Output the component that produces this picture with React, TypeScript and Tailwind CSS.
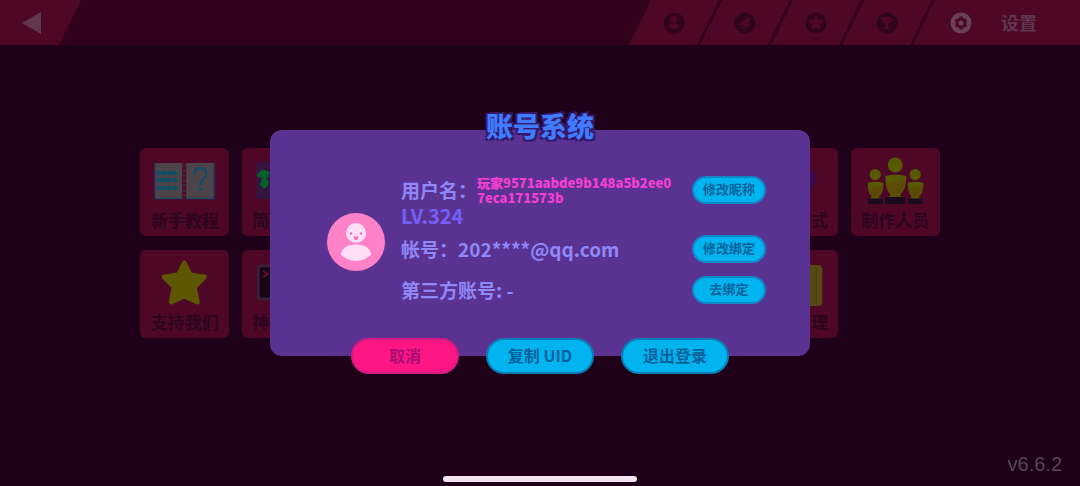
import type { ReactNode } from "react";

interface MenuItem {
  id: string;
  label?: string;
  align?: "left" | "right";
  icon?: ReactNode;
}

const Person = ({ x, y, scale }: { x: number; y: number; scale: number }) => (
  <g transform={`translate(${x} ${y}) scale(${scale})`}>
    <circle cx="0" cy="-38" r="7.5" fill="#565900" />
    <path d="M-10-27Q0-30 11-27Q11-12 5-9L5-7H-5V-9Q-10-13-10-27Z" fill="#565900" />
    <path d="M-9-18L10-24Q10-14 4-9H-4Q-8-12-9-18Z" fill="#5b4a08" />
    <path d="M-5-8H5L7-5H-7Z" fill="#594c05" />
    <rect x="-10" y="-6" width="20" height="7" rx="1" fill="#1a0a20" />
  </g>
);

const BookIcon = () => (
  <>
    <rect x="15" y="15" width="27" height="36" fill="#4c4448" />
    <rect x="46" y="15" width="28" height="36" fill="#4c4448" />
    <path d="M15 15V50M73.5 15V50M15 50.5H42M46 50.5H74" stroke="#1f4662" strokeWidth="1.5" />
    <path d="M44 16V50" stroke="#45213b" strokeWidth="3" strokeDasharray="3 2" />
    <g stroke="#0b4f69" strokeWidth="4">
      <path d="M17 25H21M22 25H27M28 25H32M33 25H37" />
      <path d="M17 32H26M27 32H32M33 32H37" />
      <path d="M17 40H21M22 40H26M27 40H32M33 40H37" />
    </g>
    <path
      d="M54 27C54 22 56 20 60 20C64 20 66 22 66 26C66 31 60 31 60 37"
      fill="none"
      stroke="#0b4f69"
      strokeWidth="2"
    />
    <circle cx="60" cy="41" r="1.7" fill="#0b4f69" />
  </>
);

const StarIcon = () => (
  <path
    d="M44 13L50 25L64 27L54 37L57 52L44 46L31 52L34 37L24 27L38 25Z"
    fill="#5c5700"
    stroke="#5c5700"
    strokeWidth="5"
    strokeLinejoin="round"
  />
);

const LanguageIcon = () => (
  <>
    <rect x="14" y="14" width="60" height="37" rx="4" fill="#33153f" />
    <path
      d="M15 27L20 22L27 24L26 29L23 28L26 34Q25 40 22 40L18 37L20 32L19 28L16 29Z"
      fill="#045f2a"
      stroke="#045f2a"
      strokeLinejoin="round"
    />
  </>
);

const TerminalIcon = () => (
  <>
    <rect x="16" y="16" width="57" height="33" rx="2" fill="#160514" stroke="#3a1f38" strokeWidth="3" />
    <path d="M21 21L25 24L21 27" fill="none" stroke="#6b0a2c" strokeWidth="2" />
  </>
);

const HeartIcon = () => (
  <path d="M44 48L24 30Q22 18 33 18Q41 18 44 25Q47 18 56 22Q68 24 66 32Q64 39 56 43Z" fill="#3a0a4c" />
);

const NoteIcon = () => (
  <>
    <rect x="16" y="15" width="56" height="41" rx="4" fill="#554a14" />
    <path d="M66 18V53" stroke="#4b3d14" />
  </>
);

const items: MenuItem[] = [
  { id: "tutorial", label: "新手教程", icon: <BookIcon /> },
  { id: "language", label: "简", align: "left", icon: <LanguageIcon /> },
  { id: "slot-3" },
  { id: "slot-4" },
  { id: "slot-5" },
  { id: "slot-6" },
  { id: "mode", label: "式", align: "right", icon: <HeartIcon /> },
  {
    id: "credits",
    label: "制作人员",
    icon: (
      <>
        <Person x={24} y={55} scale={0.75} />
        <Person x={64} y={55} scale={0.75} />
        <Person x={44} y={55} scale={1} />
      </>
    ),
  },
  { id: "support", label: "支持我们", icon: <StarIcon /> },
  { id: "console", label: "神", align: "left", icon: <TerminalIcon /> },
  { id: "slot-11" },
  { id: "slot-12" },
  { id: "slot-13" },
  { id: "slot-14" },
  { id: "manage", label: "理", align: "right", icon: <NoteIcon /> },
];

const MenuCard = ({ item }: { item: MenuItem }) => {
  if (!item.label) {
    return <div className="rounded-md bg-[#4e0727]" />;
  }
  const align =
    item.align === "left"
      ? "text-left"
      : item.align === "right"
      ? "text-right"
      : "text-center";
  return (
    <button className="flex flex-col rounded-md bg-[#4e0727] pb-1">
      <svg className="w-full h-[60px]" viewBox="0 0 88 60">
        {item.icon}
      </svg>
      <span
        className={`w-full px-[10px] text-[17px] leading-6 font-bold text-[#2c0420] whitespace-nowrap ${align}`}
      >
        {item.label}
      </span>
    </button>
  );
};

const tabs = [
  {
    name: "profile",
    icon: (
      <>
        <circle cx="11" cy="7.5" r="3.4" fill="#4e0727" />
        <path d="M5.5 15Q5.5 11.5 8.5 11.5H13.5Q16.5 11.5 16.5 15Q14 17 11 17T5.5 15Z" fill="#4e0727" />
      </>
    ),
  },
  {
    name: "explore",
    icon: (
      <path
        d="M4.5 14Q5.5 11.5 8 11Q8 8 12 7Q15 5.5 17.5 5Q16.5 8 14.5 9.5Q16 13 13 15Q10.5 17 7 16Q10 15 11 12.5Q8 12.5 4.5 14Z"
        fill="#4e0727"
      />
    ),
  },
  {
    name: "favorite",
    icon: (
      <path
        d="M11 5L12.9 8.7L17 9.3L14 12.2L14.7 16.3L11 14.4L7.3 16.3L8 12.2L5 9.3L9.1 8.7Z"
        fill="#4e0727"
        stroke="#4e0727"
        strokeWidth="2"
        strokeLinejoin="round"
      />
    ),
  },
  {
    name: "trophy",
    icon: (
      <>
        <path d="M7 5H15V6H17Q17.5 10.5 13.5 11L12 12.5V15H14V16.5H8V15H10V12.5L8.5 11Q4.5 10.5 5 6H7Z" fill="#4e0727" />
        <path d="M6 7.5Q6 9 7.5 9.5M16 7.5Q16 9 14.5 9.5" stroke="#30041f" fill="none" />
      </>
    ),
  },
];

const TabBackground = ({ className }: { className: string }) => (
  <span className={`absolute inset-y-0 -skew-x-[26deg] bg-[#4e0727] ${className}`} />
);

const Header = () => (
  <header className="flex h-[45px] overflow-hidden bg-[#30001d]">
    <button aria-label="返回" className="relative w-[70px]">
      <TabBackground className="-left-6 right-0" />
      <svg className="relative ml-[22px] h-6 w-5" viewBox="0 0 20 24">
        <path d="M0 12L19 1V23Z" fill="#613650" />
      </svg>
    </button>
    <nav className="ml-auto flex gap-[3px]">
      {tabs.map((tab) => (
        <button
          key={tab.name}
          aria-label={tab.name}
          className="relative flex w-[68px] items-center justify-center"
        >
          <TabBackground className="left-0 right-0" />
          <svg className="relative size-[22px]" viewBox="0 0 22 22">
            <circle cx="11" cy="11" r="10.5" fill="#30041f" />
            {tab.icon}
          </svg>
        </button>
      ))}
      <button className="relative flex w-[156px] items-center gap-[29px] pl-[26px]">
        <TabBackground className="left-0 -right-6" />
        <svg className="relative size-[22px]" viewBox="0 0 22 22">
          <circle cx="11" cy="11" r="10.5" fill="#68415a" />
          <circle cx="11" cy="11" r="4" fill="none" stroke="#4e0727" strokeWidth="3" />
          <path
            d="M11 4.5V7M11 15V17.5M5.4 7.8L7.5 9M14.5 13L16.6 14.2M5.4 14.2L7.5 13M14.5 9L16.6 7.8"
            stroke="#4e0727"
            strokeWidth="3"
          />
        </svg>
        <span className="relative pb-0.5 text-[18px] leading-6 font-bold text-[#5f3652]">
          设置
        </span>
      </button>
    </nav>
  </header>
);

const Avatar = () => (
  <svg className="mt-1 size-[58px] shrink-0" viewBox="0 0 58 58">
    <circle cx="29" cy="29" r="29" fill="#ff82c8" />
    <circle cx="29" cy="20" r="10" fill="#ffdff8" />
    <path
      d="M14 40Q16 34 22 32.5Q29 30.5 36 32.5Q42 34 44 40Q44 43 41 44Q36 48 29 48T17 44Q14 43 14 40Z"
      fill="#ffdff8"
    />
    <circle cx="24" cy="20.5" r="1.3" fill="#ef70b8" />
    <circle cx="34" cy="20.5" r="1.3" fill="#ef70b8" />
    <path d="M26.5 23.5H31.5Q31 27 29 27T26.5 23.5Z" fill="#ff6bb5" />
  </svg>
);

const SmallButton = ({ children }: { children: ReactNode }) => (
  <button className="ml-auto h-7 w-[74px] shrink-0 rounded-full border-2 border-[#1287c8] bg-[#00b4f0] pb-0.5 text-[13px] leading-5 font-bold text-[#07629c]">
    {children}
  </button>
);

const actionStyle = "h-9 w-[108px] rounded-full border-2 pb-0.5 text-[16px] leading-6 font-bold";

const AccountDialog = () => (
  <section
    role="dialog"
    aria-labelledby="account-title"
    className="relative flex w-1/2 min-w-[520px] items-center gap-4 rounded-xl bg-[#5a3392] pt-[46px] pr-11 pb-[52px] pl-[57px]"
  >
    <h1
      id="account-title"
      className="absolute inset-x-0 -top-[22px] text-center text-[27px] leading-9 font-black text-[#3f7cff] [text-shadow:2px_2px_0_#35196b,-2px_-1px_0_#35196b,2px_-2px_0_#35196b,-2px_2px_0_#35196b]"
    >
      账号系统
    </h1>
    <Avatar />
    <div className="flex-1 text-[19px] leading-[26px] font-bold text-[#9088f8]">
      <div className="flex h-7 items-center">
        <span className="shrink-0">用户名：</span>
        <span className="mr-4 text-[13px] leading-[15px] font-black break-all text-[#f53fd2]">
          玩家9571aabde9b148a5b2ee07eca171573b
        </span>
        <SmallButton>修改昵称</SmallButton>
      </div>
      <p className="mb-2 text-[20px] leading-[23px] text-[#7460f8]">LV.324</p>
      <div className="mb-[13px] flex items-center">
        <span>帐号：202****@qq.com</span>
        <SmallButton>修改绑定</SmallButton>
      </div>
      <div className="flex items-center">
        <span>第三方账号: -</span>
        <SmallButton>去绑定</SmallButton>
      </div>
    </div>
    <div className="absolute inset-x-0 -bottom-[18px] flex justify-center gap-[27px]">
      <button className={`${actionStyle} border-[#d51a80] bg-[#ff1685] text-[#a80e70]`}>
        取消
      </button>
      <button className={`${actionStyle} border-[#0b7db5] bg-[#00b4f0] text-[#07629c]`}>
        复制 UID
      </button>
      <button className={`${actionStyle} border-[#0b7db5] bg-[#00b4f0] text-[#07629c]`}>
        退出登录
      </button>
    </div>
  </section>
);

const App = () => (
  <div className="relative flex min-h-screen flex-col bg-[#1e0019] font-['Noto_Sans_CJK_SC',sans-serif]">
    <Header />
    <main className="grid grid-cols-8 gap-x-[13px] gap-y-[14px] px-[13%] pt-[103px]">
      {items.map((item) => (
        <MenuCard key={item.id} item={item} />
      ))}
    </main>
    <footer className="mt-auto pb-1">
      <p className="pr-[18px] text-right font-['Liberation_Sans',sans-serif] text-[20px] leading-6 text-[#574653]">
        v6.6.2
      </p>
      <div className="mx-auto h-[6px] w-[18%] rounded-full bg-[#f1e6f2]" />
    </footer>
    <div className="absolute inset-0 flex items-center justify-center">
      <AccountDialog />
    </div>
  </div>
);

export default App;
